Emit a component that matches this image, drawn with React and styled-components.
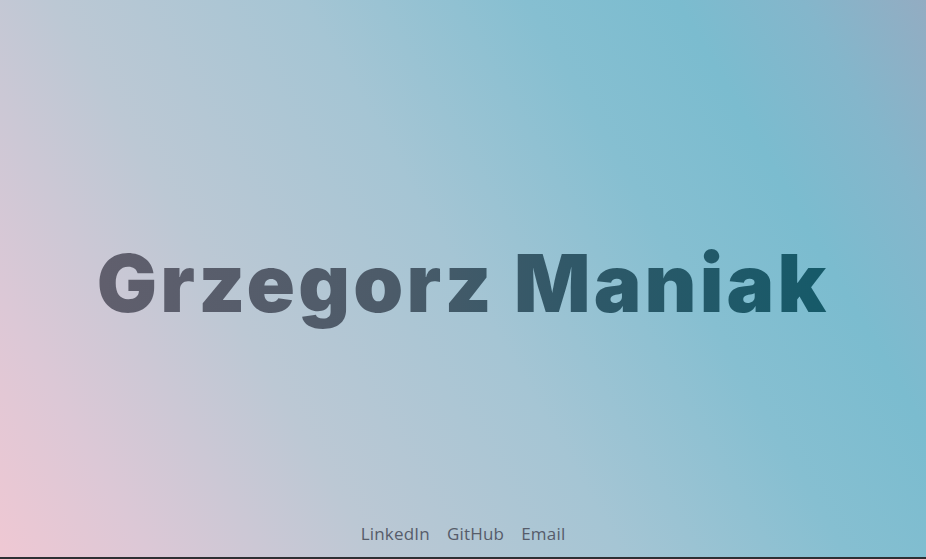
import React from 'react'
import styled, { createGlobalStyle } from 'styled-components'

const GlobalStyle = createGlobalStyle`
  * { box-sizing: border-box; }
  html, body {
    margin: 0;
    padding: 0;
    background: #2e3034;
  }
`

const Hero = styled.section`
  height: 557px;
  display: flex;
  flex-direction: column;
  align-items: center;
  justify-content: space-between;
  background: linear-gradient(60deg, #efc8d3 0%, #dcc8d6 12%, #bcc8d4 30%, #a5c5d4 50%, #86bfd1 68%, #7bbccf 80%, #84b6cb 90%, #93acc2 100%);
`

const Spacer = styled.div`
  height: 44px;
`

const Title = styled.h1`
  margin: 0;
  padding: 0 4px;
  font-family: Inter, "Liberation Sans", sans-serif;
  font-weight: 900;
  font-size: 80px;
  letter-spacing: 3.2px;
  line-height: 1.25;
  background: linear-gradient(90deg, #615f6d 0%, #4c5b69 40%, #305868 65%, #155a69 100%);
  -webkit-background-clip: text;
  background-clip: text;
  color: transparent;
`

const Links = styled.nav`
  display: flex;
  gap: 17px;
  padding-bottom: 12px;
`

const Link = styled.a`
  font-family: "Open Sans", "Liberation Sans", sans-serif;
  font-size: 17px;
  letter-spacing: 0.2px;
  color: #565c6a;
  text-decoration: none;
`

export default function App() {
  return (
    <>
      <GlobalStyle />
      <Hero>
        <Spacer />
        <Title>Grzegorz Maniak</Title>
        <Links>
          <Link href="#">LinkedIn</Link>
          <Link href="#">GitHub</Link>
          <Link href="#">Email</Link>
        </Links>
      </Hero>
    </>
  )
}
